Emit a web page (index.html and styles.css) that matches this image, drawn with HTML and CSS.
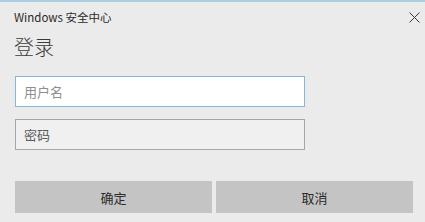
FILE: index.html
```html
<!DOCTYPE html>
<html lang="zh-CN">
<head>
<meta charset="utf-8">
<title>Windows 安全中心</title>
<link rel="stylesheet" href="styles.css">
</head>
<body>
<div class="window">
  <div class="titlebar">
    <span class="title">Windows 安全中心</span>
    <span class="close">
      <svg width="11" height="11" viewBox="0 0 11 11"><path d="M0.5 0.5 L10.5 10.5 M10.5 0.5 L0.5 10.5" stroke="#3a3a3a" stroke-width="1" fill="none"/></svg>
    </span>
  </div>
  <div class="content">
    <div class="heading">登录</div>
    <div class="field field-active"><span class="placeholder">用户名</span></div>
    <div class="field field-idle"><span class="label">密码</span></div>
    <div class="buttons">
      <div class="btn">确定</div>
      <div class="btn">取消</div>
    </div>
  </div>
</div>
</body>
</html>
```

FILE: styles.css
```css
html, body {
  margin: 0;
  padding: 0;
  background: #ebebeb;
}
body {
  font-family: "Noto Sans CJK SC", "Noto Sans", sans-serif;
  color: #1a1a1a;
}
.window {
  border-top: 2px solid #a9cfe3;
  width: 425px;
  height: 220px;
  box-sizing: border-box;
}
.titlebar {
  height: 30px;
  display: flex;
  align-items: center;
  justify-content: space-between;
  padding: 0 4px 0 14px;
}
.title {
  font-size: 11.5px;
  line-height: 14px;
  color: #2a2a2a;
}
.close {
  display: flex;
  width: 11px;
  height: 11px;
  margin-right: 1px;
}
.content {
  padding-left: 15px;
  display: flex;
  flex-direction: column;
}
.heading {
  margin-top: 2px;
  margin-left: -1px;
  font-size: 20px;
  font-weight: 300;
  line-height: 26px;
  color: #3a3a3a;
}
.field {
  margin-top: 16px;
  width: 290px;
  height: 31px;
  box-sizing: border-box;
  display: flex;
  align-items: center;
  padding-left: 8px;
  font-size: 13px;
}
.field-active {
  background: #ffffff;
  border: 1px solid #86b7d6;
}
.field-idle {
  margin-top: 12px;
  background: #f0f0f0;
  border: 1px solid #a6a6a6;
}
.placeholder {
  color: #8e8e8e;
}
.label {
  color: #5a5a5a;
}
.buttons {
  margin-top: 31px;
  display: flex;
  gap: 4px;
}
.btn {
  width: 197px;
  height: 32px;
  background: #c4c4c4;
  display: flex;
  align-items: center;
  justify-content: center;
  font-size: 13px;
  color: #2a2a2a;
}
```
